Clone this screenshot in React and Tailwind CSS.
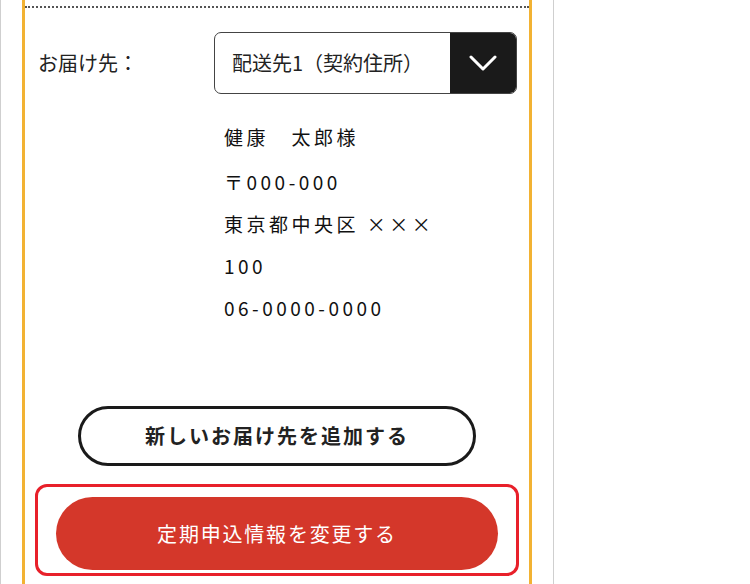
export default function App() {
  const address = ["健康　太郎様", "〒000-000", "東京都中央区 ×××", "100", "06-0000-0000"];

  return (
    <div
      className="w-[750px] h-[584px] bg-white overflow-hidden text-[#222]"
      style={{ fontFamily: '"Noto Sans CJK JP", "Noto Sans", sans-serif' }}
    >
      <div className="w-[554px] h-full border-x border-[#cfcfcf] px-[21px]">
        <div className="h-full border-x-[3px] border-[#f2b233] pt-[6px]">
          <div className="border-t-2 border-dotted border-[#555]" />

          {/* delivery select */}
          <div className="flex items-center mt-[24px] pl-[13px]">
            <span className="w-[176px] text-[20px] leading-none">お届け先：</span>
            <div className="flex w-[303px] h-[62px] rounded-[7px] border-[1.5px] border-[#444] overflow-hidden">
              <div className="flex-1 flex items-center pl-[17px] text-[20px]">配送先1（契約住所）</div>
              <div className="w-[66px] bg-[#1a1a1a] flex items-center justify-center">
                <svg width="28" height="16" viewBox="0 0 28 16" fill="none">
                  <path d="M2 2l12 12L26 2" stroke="#fff" strokeWidth="3" strokeLinecap="round" strokeLinejoin="round" />
                </svg>
              </div>
            </div>
          </div>

          {/* address */}
          <div className="mt-[22px] pl-[199px] text-[19px] tracking-[3.5px] text-[#111]">
            {address.map((line, i) => (
              <div key={i} className={`h-[42px] leading-[42px] ${i === 0 ? "mb-[3px]" : ""}`}>
                {line}
              </div>
            ))}
          </div>

          {/* buttons */}
          <div className="flex justify-center mt-[77px]">
            <button className="w-[398px] h-[60px] rounded-full border-[3px] border-[#1a1a1a] bg-white text-[20px] font-bold tracking-[2px]">
              新しいお届け先を追加する
            </button>
          </div>

          <div className="flex justify-center mt-[18px]">
            <div className="w-[484px] h-[92px] rounded-[12px] border-[3px] border-[#e8202a] pt-[10px] flex justify-center">
              <button className="w-[442px] h-[73px] rounded-full bg-[#d4372a] text-white text-[20px] tracking-[1.8px]">
                定期申込情報を変更する
              </button>
            </div>
          </div>
        </div>
      </div>
    </div>
  );
}
